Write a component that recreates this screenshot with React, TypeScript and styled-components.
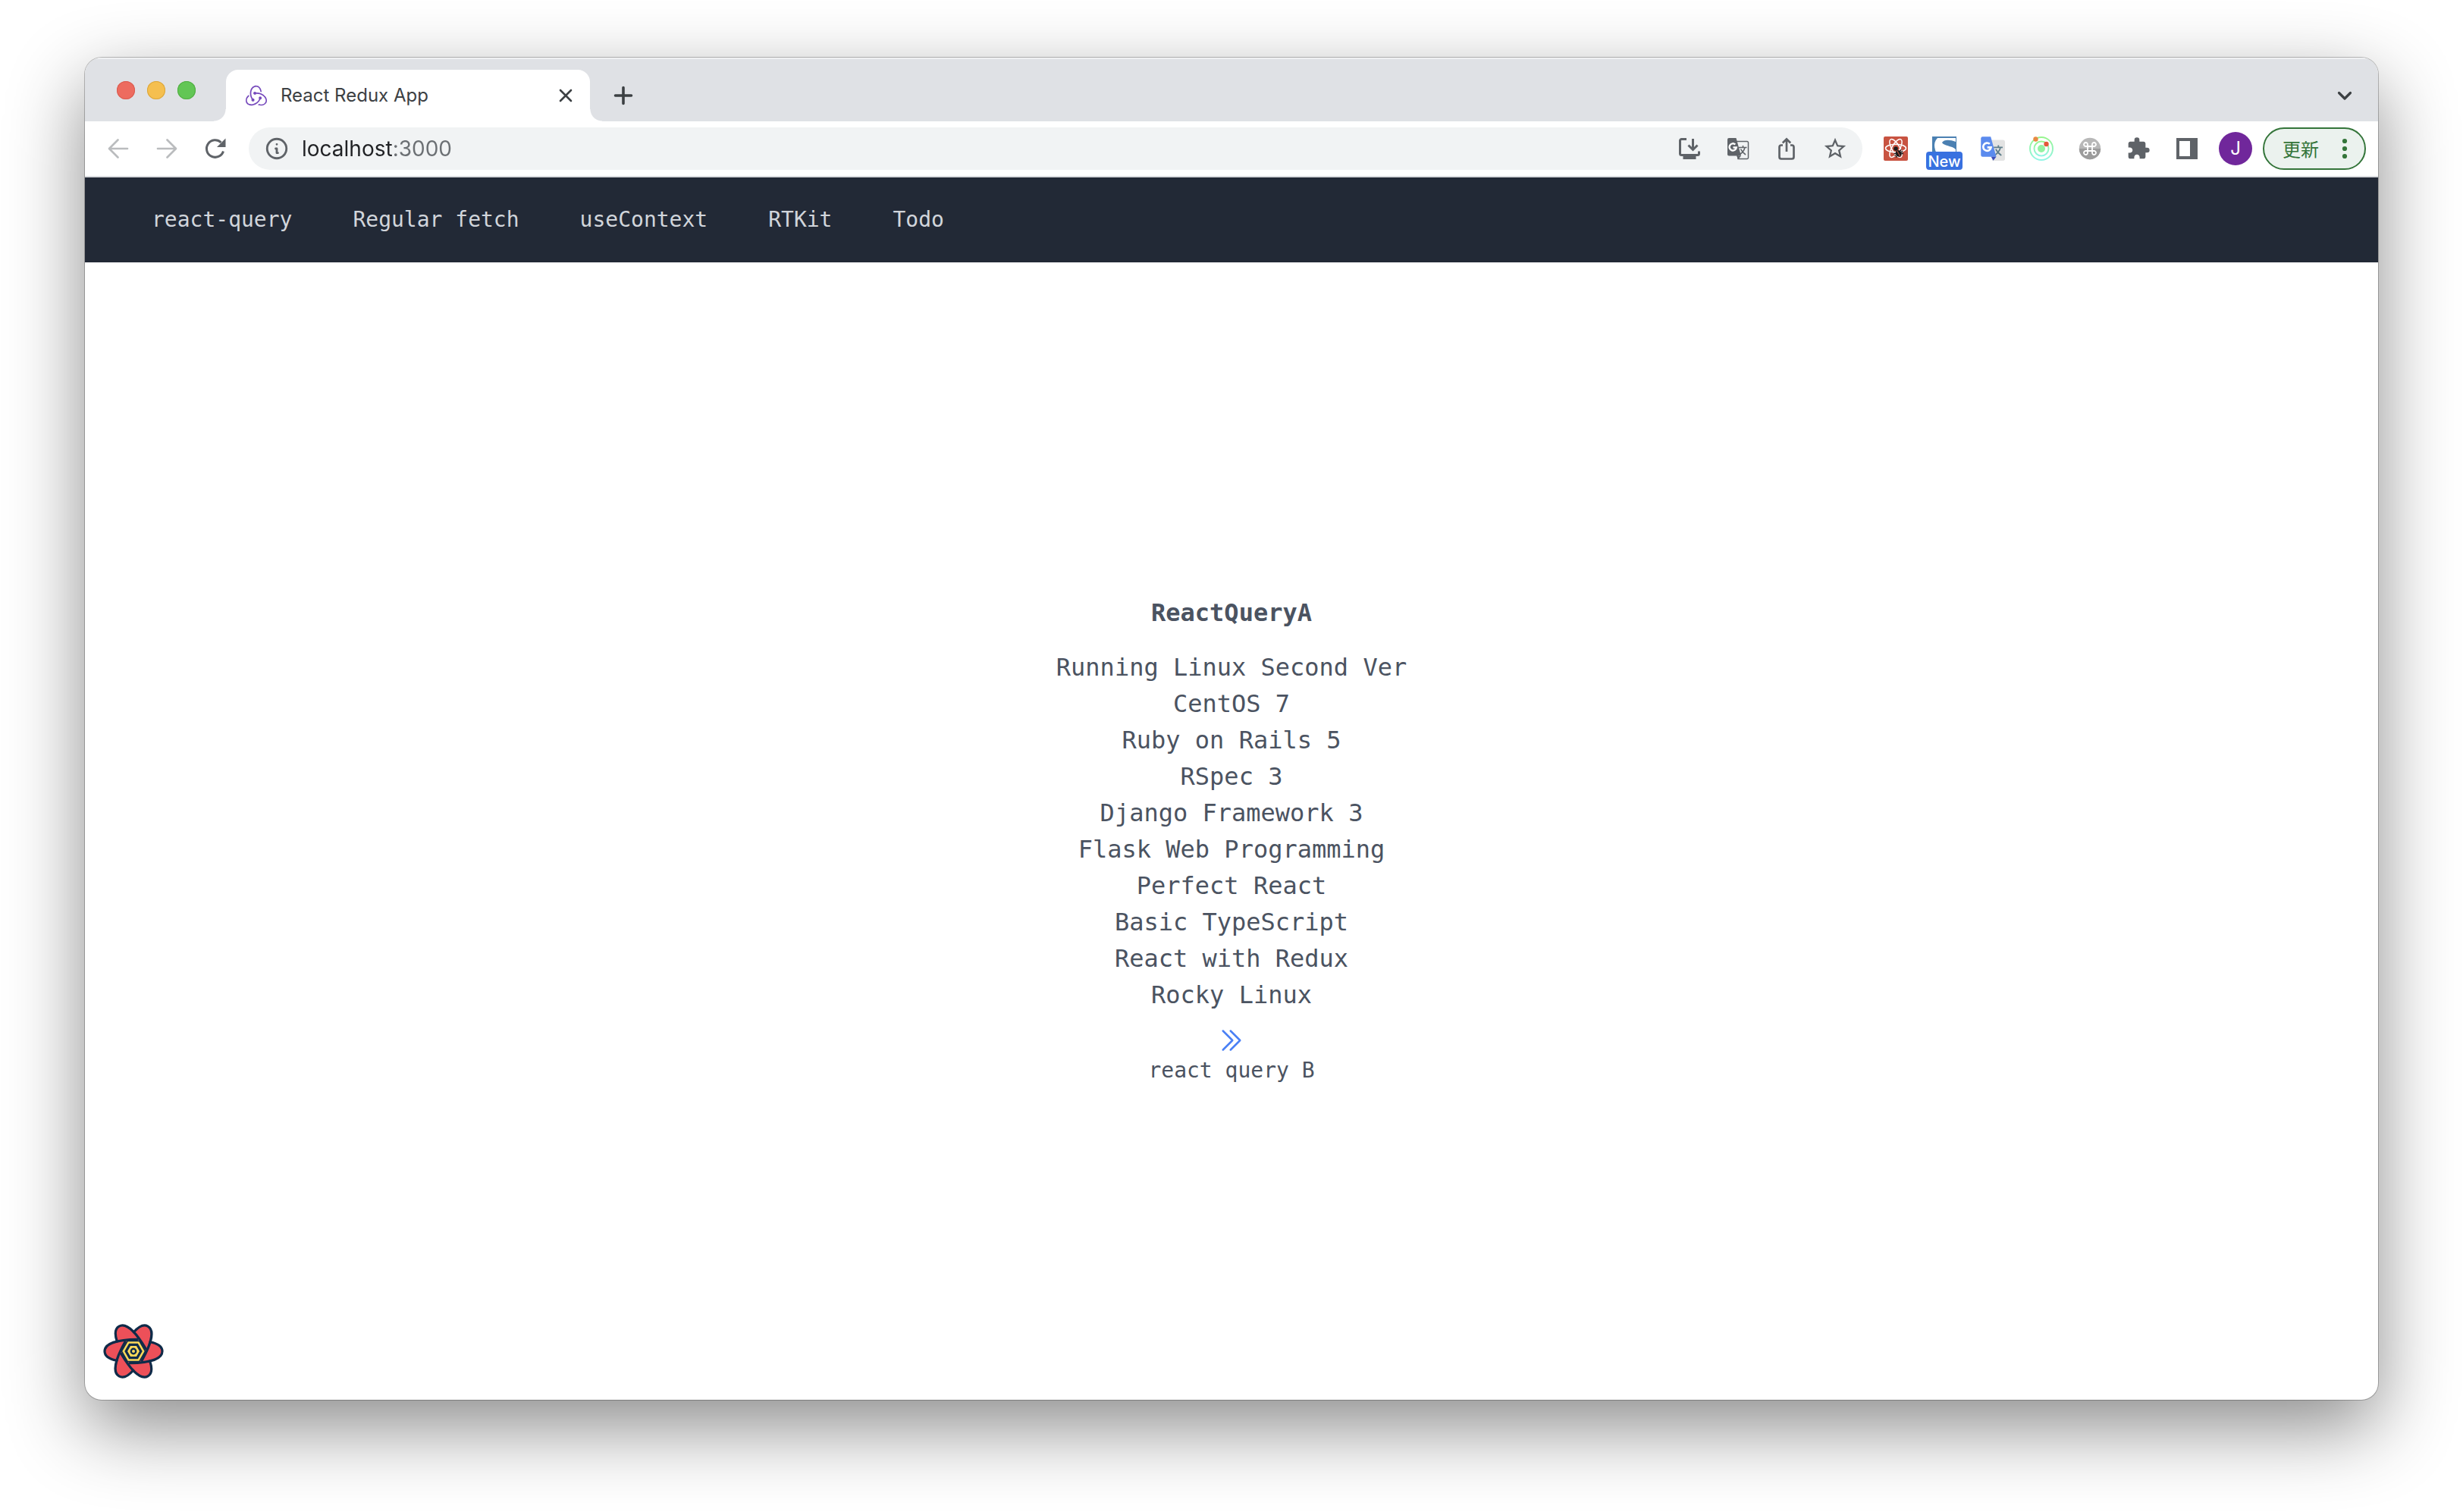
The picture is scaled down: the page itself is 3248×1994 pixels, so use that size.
import React from 'react';
import styled, { createGlobalStyle } from 'styled-components';
import { SiRedux } from 'react-icons/si';
import { MdExtension, MdStarBorder } from 'react-icons/md';
import { HiOutlineInformationCircle } from 'react-icons/hi';

const ui = `Inter, "Liberation Sans", "Noto Sans CJK JP", sans-serif`;
const mono = `"DejaVu Sans Mono", "Liberation Mono", monospace`;
const iconGray = '#5f6368';
const green = '#34753a';

const GlobalStyle = createGlobalStyle`
  *, *::before, *::after { box-sizing: border-box; }
  body { margin: 0; background: #fff; }
  h1, ul { margin: 0; padding: 0; }
  button { margin: 0; padding: 0; border: 0; background: none; font: inherit; color: inherit; cursor: pointer; }
  svg { display: block; flex: none; }
`;

const Desktop = styled.div`
  display: flex;
  min-height: 100vh;
  padding: 76px 112px 148px;
`;

const Window = styled.div`
  display: flex;
  flex: 1;
  flex-direction: column;
  min-width: 0;
  overflow: hidden;
  border-radius: 22px;
  background: #fff;
  box-shadow: 0 0 0 1px rgba(0, 0, 0, 0.24), 0 36px 100px rgba(0, 0, 0, 0.46);
`;

const TabStrip = styled.div`
  display: flex;
  align-items: flex-end;
  height: 84px;
  padding-right: 16px;
  background: #dfe1e5;
  box-shadow: inset 0 2px 0 #eff0f2;
  color: #3c4043;
`;

const Lights = styled.div`
  display: flex;
  align-self: center;
  gap: 16px;
  padding: 2px 24px 0 42px;
`;

const Light = styled.button<{ $fill: string; $rim: string }>`
  width: 24px;
  height: 24px;
  border-radius: 50%;
  background: ${(p) => p.$fill};
  box-shadow: inset 0 0 0 1px ${(p) => p.$rim};
`;

const Flare = styled.span<{ $side: 'left' | 'right' }>`
  width: 16px;
  height: 16px;
  background: radial-gradient(circle at ${(p) => p.$side} top, #dfe1e5 15px, #fff 16px);
`;

const Tab = styled.div`
  display: flex;
  align-items: center;
  gap: 18px;
  width: 480px;
  height: 68px;
  padding: 0 18px 0 26px;
  border-radius: 16px 16px 0 0;
  background: #fff;
  font: 400 24px/32px ${ui};
`;

const TabTitle = styled.span`
  flex: 1;
`;

const IconButton = styled.button<{ $w: number; $h: number }>`
  display: flex;
  align-items: center;
  justify-content: center;
  flex: none;
  width: ${(p) => p.$w}px;
  height: ${(p) => p.$h}px;
`;

const Spacer = styled.span`
  flex: 1;
`;

const Toolbar = styled.div`
  display: flex;
  align-items: center;
  height: 74px;
  padding: 0 16px 0 12px;
  border-bottom: 2px solid #dadce0;
  background: #fff;
  color: ${iconGray};
`;

const Omnibox = styled.div`
  display: flex;
  align-items: center;
  flex: 1;
  height: 56px;
  margin: 0 12px;
  padding: 0 4px 0 20px;
  border-radius: 28px;
  background: #f1f3f4;
`;

const Address = styled.input`
  flex: 1;
  min-width: 0;
  height: 40px;
  margin: 0 0 0 16px;
  padding: 0;
  border: 0;
  outline: 0;
  font: 400 28px/40px ${ui};
  color: #202124;
  background: linear-gradient(90deg, #202124 119px, #6b6f73 119px);
  background-clip: text;
  -webkit-background-clip: text;
  -webkit-text-fill-color: transparent;
`;

const Badge = styled.span`
  position: absolute;
  left: 8px;
  right: 8px;
  bottom: 0;
  height: 24px;
  border-radius: 4px;
  background: #3871e0;
  color: #fff;
  font: 500 20px/26px ${ui};
  text-align: center;
`;

const Badged = styled.span`
  position: relative;
  display: flex;
`;

const Avatar = styled.span`
  width: 44px;
  height: 44px;
  border-radius: 50%;
  background: #70279b;
  color: #fff;
  font: 400 24px/44px ${ui};
  text-align: center;
`;

const UpdateButton = styled.button`
  display: flex;
  align-items: center;
  justify-content: space-between;
  width: 136px;
  height: 56px;
  margin-left: 4px;
  padding: 0 22px 0 24px;
  border: 2px solid ${green};
  border-radius: 28px;
  background: #ebf2ee;
  color: ${green};
  font: 400 24px/32px "Noto Sans CJK JP", sans-serif;
`;

const Nav = styled.nav`
  display: flex;
  align-items: center;
  gap: 32px;
  height: 112px;
  padding: 0 64px;
  background: #222936;
`;

const NavLink = styled.a`
  padding: 16px 24px;
  color: #d1d5db;
  font: 400 28px/40px ${mono};
  text-decoration: none;
`;

const Main = styled.main`
  position: relative;
  display: flex;
  flex: 1;
  flex-direction: column;
  align-items: center;
  justify-content: center;
  color: #4b5361;
  font: 400 32px/48px ${mono};
`;

const Title = styled.h1`
  margin: 24px 0;
  font: 700 32px/48px ${mono};
`;

const TaskList = styled.ul`
  list-style: none;
  text-align: center;
`;

const NextLink = styled.a`
  display: flex;
  flex-direction: column;
  align-items: center;
  margin-top: 16px;
  color: inherit;
  font-size: 28px;
  line-height: 40px;
  text-decoration: none;
`;

const DevtoolsButton = styled.button`
  position: absolute;
  left: 24px;
  bottom: 24px;
`;

const Glyph = ({ children, size = 32 }: { children: React.ReactNode; size?: number }) => (
  <svg width={size} height={size} viewBox="0 0 32 32" fill="none" aria-hidden="true">
    {children}
  </svg>
);

const line = (width: number, color = 'currentColor') => ({
  stroke: color,
  strokeWidth: width,
  strokeLinecap: 'round' as const,
  strokeLinejoin: 'round' as const,
});

const BackIcon = () => (
  <Glyph>
    <path d="M28 16H4.500M15.500 4.500L4 16l11.500 11.500" {...line(2.7, '#babcbe')} />
  </Glyph>
);

const ForwardIcon = () => (
  <Glyph>
    <path d="M4 16h23.500M16.500 4.500L28 16 16.500 27.500" {...line(2.7, '#babcbe')} />
  </Glyph>
);

const ReloadIcon = () => (
  <Glyph>
    <path d="M26.500 19.500A11.300 11.300 0 1 1 23.500 7.800" stroke="currentColor" strokeWidth="3" />
    <path d="M29.500 2.500V14H18z" fill="currentColor" />
  </Glyph>
);

const InstallIcon = () => (
  <Glyph>
    <path d="M12 3.500H5.500a2 2 0 0 0-2 2V22.500a2 2 0 0 0 2 2h21a2 2 0 0 0 2-2V19.500" stroke="currentColor" strokeWidth="3" />
    <path d="M20.500 3v14.500M14.500 11.500l6 6 6-6" stroke="currentColor" strokeWidth="3" />
    <path d="M7.500 25.500h17V30h-17z" fill="currentColor" />
  </Glyph>
);

const TranslateGlyph = ({ back, rim, front, fold, ink }: Record<'back' | 'rim' | 'front' | 'fold' | 'ink', string>) => (
  <>
    <path d="M13 6.500h15a1.500 1.500 0 0 1 1.500 1.500v20a1.500 1.500 0 0 1-1.500 1.500H16z" fill={back} stroke={rim} strokeWidth="1.500" />
    <path d="M17 14.500h10.500M22.500 12v2.500M25 14.500c-1 4-3.500 7-6.500 9M19.500 16.500c1.500 3.500 3.800 5.500 6.500 7.500" stroke={ink} strokeWidth="1.600" />
    <path d="M4 2h9.500L20 25.500H4a2 2 0 0 1-2-2V4a2 2 0 0 1 2-2z" fill={front} />
    <path d="M14 25.500h6L16.500 30z" fill={fold} />
    <path d="M12.300 10.500a4.600 4.600 0 1 0 1.500 4H9.500" stroke="#fff" strokeWidth="2.400" />
  </>
);

const ShareIcon = () => (
  <Glyph>
    <path d="M11 11.500H9a2.500 2.500 0 0 0-2.500 2.500v13A2.500 2.500 0 0 0 9 29.500h14a2.500 2.500 0 0 0 2.500-2.500V14a2.500 2.500 0 0 0-2.500-2.500h-2" stroke="currentColor" strokeWidth="2.700" />
    <path d="M16 20V4M10.800 8.500L16 3.300l5.200 5.200" stroke="currentColor" strokeWidth="2.700" />
  </Glyph>
);

const DevtoolsIcon = () => (
  <Glyph>
    <rect width="32" height="32" rx="2" fill="#c85341" />
    <g stroke="#fff" strokeWidth="1.500">
      {[0, 60, 120].map((a) => (
        <ellipse key={a} cx="16" cy="15.500" rx="13.500" ry="5.200" transform={`rotate(${a} 16 15.500)`} />
      ))}
    </g>
    <circle cx="16" cy="16" r="2.800" fill="#1b1b1b" />
    <g transform="rotate(-28 19.500 22)">
      <ellipse cx="19.500" cy="22.500" rx="3.500" ry="4.800" fill="#1b1b1b" />
      <path d="M14 19.500l11 6M14 25.500l11-6M13.500 22.500h12" stroke="#1b1b1b" strokeWidth="1.300" />
      <path d="M19.500 18v9.500" stroke="#c85341" strokeWidth="1" />
    </g>
  </Glyph>
);

const SnapIcon = () => (
  <Glyph>
    <rect width="32" height="32" fill="#4b80b2" />
    <path d="M7 2h24v28H10C3 19 0 9 7 2z" fill="#fff" />
    <path d="M13 8c2-4 10-4.500 18-1v10c-5-5-16-4.500-18-9z" fill="#4b80b2" />
  </Glyph>
);

const OrbitIcon = () => (
  <Glyph>
    <defs>
      <linearGradient id="orbit" x1="0" y1="0" x2="0" y2="1">
        <stop offset="0" stopColor="#97f58d" />
        <stop offset="1" stopColor="#93f5e6" />
      </linearGradient>
    </defs>
    <circle cx="16" cy="16" r="15" stroke="url(#orbit)" strokeWidth="2" />
    <circle cx="16" cy="16" r="9.500" stroke="url(#orbit)" strokeWidth="2" />
    <circle cx="16" cy="16" r="5" fill="#93f3a4" />
    <circle cx="8.500" cy="3.500" r="3.200" fill="#e88a43" />
    <circle cx="22.500" cy="10" r="3.200" fill="#e2593a" />
  </Glyph>
);

const CommandIcon = () => (
  <Glyph>
    <circle cx="16" cy="16" r="14.200" fill="#b8b8b8" />
    <path d="M1.800 16a14.200 14.200 0 0 0 28.400 0z" fill="#9c9c9c" />
    <path
      d="M13 13h6v6h-6zM13 13h-2.300a2.500 2.500 0 1 1 2.300-2.500zM19 13v-2.500a2.500 2.500 0 1 1 2.300 2.500zM19 19h2.300a2.500 2.500 0 1 1-2.300 2.500zM13 19v2.500a2.500 2.500 0 1 1-2.300-2.500z"
      stroke="#fff"
      strokeWidth="1.800"
    />
  </Glyph>
);

const SidePanelIcon = () => (
  <Glyph>
    <path d="M2 2h28v28H2zM6 6v20h14V6z" fill="currentColor" fillRule="evenodd" />
  </Glyph>
);

const MoreDots = () => (
  <svg width="8" height="28" viewBox="0 0 8 28" fill="currentColor" aria-hidden="true">
    <circle cx="4" cy="4" r="3.100" />
    <circle cx="4" cy="14" r="3.100" />
    <circle cx="4" cy="24" r="3.100" />
  </svg>
);

const DoubleChevron = () => (
  <svg width="40" height="40" viewBox="0 0 24 24" fill="none" aria-hidden="true">
    <path d="M5.250 4.500l7.500 7.500-7.500 7.500m6-15l7.500 7.500-7.500 7.500" {...line(1.5, '#4a80f5')} />
  </svg>
);

const petalAngles = [0, 60, 120, 180, 240, 300];

const QueryFlower = () => (
  <svg width="80" height="80" viewBox="-40 -40 80 80" fill="none" aria-hidden="true">
    {petalAngles.map((a) => (
      <path key={a} transform={`rotate(${a})`} d="M4-15.500C-12-15.500-38-13-38 0c0 7 7 10.500 16 12.300L0 0z" fill="#ed5059" />
    ))}
    {petalAngles.map((a) => (
      <path key={a} transform={`rotate(${a})`} d="M5-15.700C-12-15.500-38-13-38 0c0 7 7 10.500 16 12.300" {...line(3.2, '#0f2b49')} />
    ))}
    <path d="M-16.500 0L-8.250-14.300H8.250L16.500 0 8.250 14.300H-8.250z" fill="#0f2b49" />
    <path d="M-13.200 0L-6.600-11.400H6.600L13.200 0 6.600 11.400H-6.600z" stroke="#fcd95a" strokeWidth="2.500" />
    <path d="M-6.800 0L-3.400-5.900H3.400L6.800 0 3.400 5.900H-3.400z" fill="#fcd95a" stroke="#fcd95a" strokeWidth="2" />
    <circle r="3.200" stroke="#0f2b49" strokeWidth="2.400" />
  </svg>
);

const navItems = ['react-query', 'Regular fetch', 'useContext', 'RTKit', 'Todo'];

const tasks = [
  'Running Linux Second Ver',
  'CentOS 7',
  'Ruby on Rails 5',
  'RSpec 3',
  'Django Framework 3',
  'Flask Web Programming',
  'Perfect React',
  'Basic TypeScript',
  'React with Redux',
  'Rocky Linux',
];

const tools: { label: string; icon: React.ReactNode }[] = [
  { label: 'Back', icon: <BackIcon /> },
  { label: 'Forward', icon: <ForwardIcon /> },
  { label: 'Reload', icon: <ReloadIcon /> },
];

const pageActions: { label: string; icon: React.ReactNode }[] = [
  { label: 'Install app', icon: <InstallIcon /> },
  {
    label: 'Translate this page',
    icon: (
      <Glyph>
        <TranslateGlyph back="#f1f3f4" rim={iconGray} front={iconGray} fold={iconGray} ink={iconGray} />
      </Glyph>
    ),
  },
  { label: 'Share', icon: <ShareIcon /> },
  { label: 'Bookmark', icon: <MdStarBorder size={34} /> },
];

const extensions: { label: string; icon: React.ReactNode; badge?: string }[] = [
  { label: 'React Developer Tools', icon: <DevtoolsIcon /> },
  { label: 'Screenshot tool', icon: <SnapIcon />, badge: 'New' },
  {
    label: 'Google Translate',
    icon: (
      <Glyph size={36}>
        <TranslateGlyph back="#e3e3e3" rim="#e3e3e3" front="#5b8bee" fold="#3c4eb8" ink="#5f7f8c" />
      </Glyph>
    ),
  },
  { label: 'Orbit', icon: <OrbitIcon /> },
  { label: 'Shortcuts', icon: <CommandIcon /> },
  { label: 'Extensions', icon: <MdExtension size={32} /> },
  { label: 'Side panel', icon: <SidePanelIcon /> },
  { label: 'Profile', icon: <Avatar>J</Avatar> },
];

export default function App() {
  return (
    <>
      <GlobalStyle />
      <Desktop>
        <Window>
          <TabStrip>
            <Lights>
              <Light aria-label="Close window" $fill="#ed6b5f" $rim="#d95c50" />
              <Light aria-label="Minimize window" $fill="#f5bf4f" $rim="#dba63c" />
              <Light aria-label="Zoom window" $fill="#62c655" $rim="#51ad43" />
            </Lights>
            <Flare $side="left" />
            <Tab>
              <SiRedux size={28} color="#764abc" />
              <TabTitle>React Redux App</TabTitle>
              <IconButton $w={28} $h={28} aria-label="Close tab">
                <Glyph size={28}>
                  <path d="M8 8l16 16M24 8L8 24" {...line(3)} />
                </Glyph>
              </IconButton>
            </Tab>
            <Flare $side="right" />
            <IconButton $w={56} $h={68} aria-label="New tab">
              <Glyph>
                <path d="M16 5.500v21M5.500 16h21" {...line(3.6)} />
              </Glyph>
            </IconButton>
            <Spacer />
            <IconButton $w={56} $h={68} aria-label="Search tabs">
              <Glyph>
                <path d="M8.500 12.500L16 20l7.500-7.500" {...line(3.2)} />
              </Glyph>
            </IconButton>
          </TabStrip>

          <Toolbar>
            {tools.map((t) => (
              <IconButton key={t.label} $w={64} $h={56} aria-label={t.label}>
                {t.icon}
              </IconButton>
            ))}
            <Omnibox>
              <HiOutlineInformationCircle size={34} />
              <Address aria-label="Address" defaultValue="localhost:3000" spellCheck={false} />
              {pageActions.map((a) => (
                <IconButton key={a.label} $w={64} $h={56} aria-label={a.label}>
                  {a.icon}
                </IconButton>
              ))}
            </Omnibox>
            {extensions.map((e) => (
              <Badged key={e.label}>
                <IconButton $w={64} $h={56} aria-label={e.label}>
                  {e.icon}
                </IconButton>
                {e.badge && <Badge>{e.badge}</Badge>}
              </Badged>
            ))}
            <UpdateButton>
              更新
              <MoreDots />
            </UpdateButton>
          </Toolbar>

          <Nav>
            {navItems.map((item) => (
              <NavLink key={item} href="#">
                {item}
              </NavLink>
            ))}
          </Nav>

          <Main>
            <Title>ReactQueryA</Title>
            <TaskList>
              {tasks.map((task) => (
                <li key={task}>{task}</li>
              ))}
            </TaskList>
            <NextLink href="#">
              <DoubleChevron />
              react query B
            </NextLink>
            <DevtoolsButton aria-label="Open React Query Devtools">
              <QueryFlower />
            </DevtoolsButton>
          </Main>
        </Window>
      </Desktop>
    </>
  );
}
